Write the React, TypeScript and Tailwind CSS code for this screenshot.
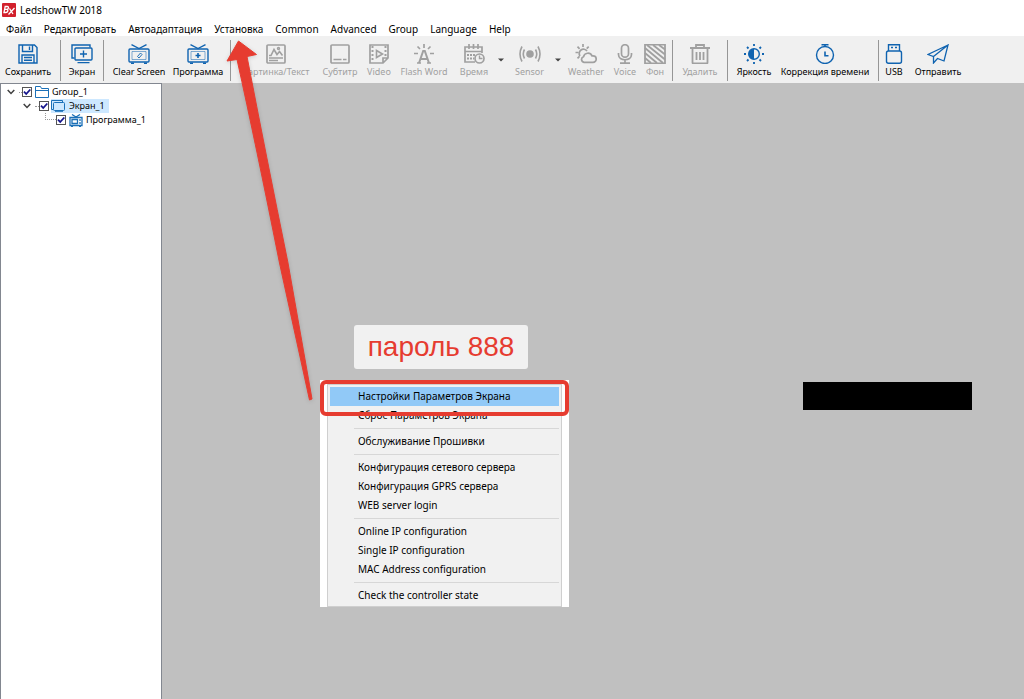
import React from 'react';

type IconProps = { children: React.ReactNode; className?: string };

function Icon({ children, className = 'h-5 w-[22px]' }: IconProps) {
  return (
    <svg viewBox="0 0 22 20" className={className} fill="none" stroke="currentColor" strokeWidth="1.4" aria-hidden="true">
      {children}
    </svg>
  );
}

const icons = {
  save: (
    <Icon>
      <path d="M2 1h15.500l2.500 2.500v15.500H2z" />
      <path d="M5.500 1v6.500h10V1M12.500 2.500v3.500M5 19v-8h12v8M7 13.500h8M7 16.200h8" />
    </Icon>
  ),
  screen: (
    <Icon>
      <path d="M3.500 14H1V1h18v2.500" />
      <rect x="4" y="4" width="17" height="12" rx="1" />
      <path d="M12.500 6.500v7M9 10h7M6.500 18.600h12" />
    </Icon>
  ),
  clear: (
    <Icon>
      <path d="M3.500 0.700L11 4.500l7.500-3.800" />
      <rect x="1" y="5" width="20" height="13" rx="1" />
      <path d="M4 7.500h14v8H4z" strokeWidth="0.500" />
      <path d="M9.500 12.500l3-3.500M11 14l3-3.500M9.500 12.500l1.500 1.500M12.500 9l1.500 1.500" strokeWidth="0.900" />
      <path d="M3 19.300h3M16 19.300h3" />
    </Icon>
  ),
  program: (
    <Icon>
      <path d="M3.500 0.700L11 4.500l7.500-3.800" />
      <rect x="1" y="5" width="20" height="13" rx="1" />
      <path d="M4 7.500h14v8H4z" strokeWidth="0.500" />
      <path d="M11 9v5M8.500 11.500h5" strokeWidth="1.600" />
      <path d="M3 19.300h3M16 19.300h3" />
    </Icon>
  ),
  picture: (
    <Icon>
      <rect x="2" y="1" width="18" height="18" rx="1" strokeWidth="1.700" />
      <path d="M4 11.500h2l3-6 3 5 2.500-3 3 4M4 14h14M4 16.500h9" strokeWidth="1.600" />
      <circle cx="13.500" cy="4.500" r="1" />
    </Icon>
  ),
  subtitle: (
    <Icon>
      <rect x="2" y="1" width="18" height="18" rx="1" strokeWidth="1.700" />
      <path d="M4.500 15.500h8M14 15.500h3.500" />
    </Icon>
  ),
  video: (
    <Icon>
      <path d="M2 1h18v13l-5 5H2zM20 14h-5v5" strokeWidth="1.700" />
      <path d="M4.500 2v16M17.500 2v11" strokeWidth="2" strokeDasharray="2 2" />
      <path d="M8.500 6.500l6 3.500-6 3.500z" strokeWidth="1.600" />
    </Icon>
  ),
  flash: (
    <Icon>
      <path d="M6 19l4.200-12h1.600L16 19M7.500 15h7" strokeWidth="2" />
      <path d="M4 19h4M14 19h4" />
      <path d="M11 0v4M4.500 2.500L7 5M17.500 2.500L15 5M1 9.500h4M17 9.500h4" strokeWidth="1.700" />
    </Icon>
  ),
  time: (
    <Icon>
      <path d="M12 18H2V3h17v6M2 7.500h17M6 0v5M10.500 0v5M15 0v5" strokeWidth="1.700" />
      <path d="M4 11h8M4 14.500h7" strokeWidth="1.800" strokeDasharray="2 1" />
      <circle cx="16.500" cy="14.500" r="4.500" strokeWidth="1.700" />
      <path d="M16.500 11.500v3h3" />
    </Icon>
  ),
  sensor: (
    <Icon>
      <circle cx="11" cy="10" r="3.800" fill="currentColor" stroke="none" />
      <path d="M5.500 5.500q-2.500 4.500 0 9M16.500 5.500q2.500 4.500 0 9M3 2.500q-4 7.500 0 15M19 2.500q4 7.500 0 15" strokeWidth="1.600" />
    </Icon>
  ),
  weather: (
    <Icon>
      <path d="M9 18.300h9a3.200 3.200 0 000-6.400h-1a4.500 4.500 0 00-8.500 0.800 2.900 2.900 0 000.500 5.600z" strokeWidth="1.700" />
      <path d="M5 12a4.300 4.300 0 117-5M8 0v3M2.500 2.700L4.600 4.800M0.500 8.500h2.800M13.700 2.700l-2 2M2.500 14.300l2-2" strokeWidth="1.700" />
    </Icon>
  ),
  voice: (
    <Icon>
      <rect x="7.500" y="0.700" width="7" height="12.500" rx="3.500" strokeWidth="1.700" />
      <path d="M4.500 9v1.500c0 7 13 7 13 0V9M11 16v3M6 19.200h10" strokeWidth="1.700" />
    </Icon>
  ),
  backdrop: (
    <Icon>
      <path d="M1 0.700h20v18.600H1z" strokeWidth="1.800" />
      <path d="M1 14l6 5M1 9l12 10M1 4l18 15M3 1l18 14.500M9 1l12 9.500M15 1l6 4.500" strokeWidth="1.800" />
    </Icon>
  ),
  trash: (
    <Icon>
      <path d="M1 4h20M7 3.500V1h8v2.500M3.500 5v13.500q0 1 1 1h13q1 0 1-1V5M7.500 8v8M11 8v8M14.500 8v8" strokeWidth="1.800" />
    </Icon>
  ),
  brightness: (
    <Icon>
      <circle cx="11" cy="10" r="5.300" />
      <path d="M11 4.700a5.300 5.300 0 000 10.600z" fill="currentColor" stroke="none" />
      <path d="M11 0v2M11 18v2M1 10h2M19 10h2M4 3l1.500 1.500M16.500 15.500L18 17M4 17l1.500-1.500M16.500 4.500L18 3" strokeWidth="1.800" />
    </Icon>
  ),
  clock: (
    <Icon>
      <circle cx="11" cy="11" r="8.500" />
      <path d="M7.500 0.700h7M11 1v2M11 7.500v4.200h3.500" strokeWidth="1.600" />
    </Icon>
  ),
  usb: (
    <Icon>
      <rect x="3.500" y="7" width="15" height="12.300" rx="2" />
      <path d="M5.500 7V0.700h11V7M8 3.500h2M12 3.500h2" />
    </Icon>
  ),
  send: (
    <Icon>
      <path d="M21 1L1 10.500l5.500 2zM21 1L6.500 12.500v6.500l4-4.500L17 17z" strokeWidth="1.300" />
    </Icon>
  ),
};

type ToolProps = { icon: React.ReactNode; label: string; width: string; disabled?: boolean };

function Tool({ icon, label, width, disabled = false }: ToolProps) {
  return (
    <button
      type="button"
      disabled={disabled}
      className={`flex ${width} shrink-0 flex-col items-center gap-0.5 pt-2 text-[#0f63b0] disabled:text-[#a0a0a0]`}
    >
      {icon}
      <span className={`text-[9px] leading-3 whitespace-nowrap ${disabled ? 'text-[#a0a0a0]' : 'text-black'}`}>{label}</span>
    </button>
  );
}

function Separator() {
  return <div className="mx-1 mt-1 mb-0.5 w-px shrink-0 bg-[#969696]" />;
}

function DropArrow({ label }: { label: string }) {
  return (
    <button type="button" aria-label={label} className="flex w-3 shrink-0 items-center justify-center">
      <svg viewBox="0 0 6 4" className="h-1 w-1.5" aria-hidden="true">
        <path d="M0 0.500h6L3 3.500z" fill="#444" />
      </svg>
    </button>
  );
}

function Chevron() {
  return (
    <svg viewBox="0 0 8 6" className="h-1.5 w-2 shrink-0" fill="none" stroke="#404040" strokeWidth="1.500" aria-hidden="true">
      <path d="M0.700 1L4 4.500 7.300 1" />
    </svg>
  );
}

function Check({ label }: { label: string }) {
  return (
    <span className="relative flex h-2.5 w-2.5 shrink-0">
      <input
        type="checkbox"
        defaultChecked
        aria-label={label}
        className="peer h-2.5 w-2.5 appearance-none border border-[#555] bg-white"
      />
      <svg viewBox="0 0 10 10" className="pointer-events-none absolute inset-0 hidden h-2.5 w-2.5 peer-checked:block" fill="none" stroke="#14148c" strokeWidth="1.800" aria-hidden="true">
        <path d="M2 4.700L4.200 7 8.300 2.500" />
      </svg>
    </span>
  );
}

const menus = ['Файл', 'Редактировать', 'Автоадаптация', 'Установка', 'Common', 'Advanced', 'Group', 'Language', 'Help'];

const setupGroups = [
  ['Настройки Параметров Экрана', 'Сброс Параметров Экрана'],
  ['Обслуживание Прошивки'],
  ['Конфигурация сетевого сервера', 'Конфигурация GPRS сервера', 'WEB server login'],
  ['Online IP configuration', 'Single IP configuration', 'MAC Address configuration'],
  ['Check the controller state'],
];

function SetupMenu() {
  return (
    <div className="absolute top-[297px] left-[158px] w-[249px] bg-white px-[7px] pt-1">
      <div className="border border-[#cfcfcf] bg-[#f1f1f1] px-0.5 pt-0.5 pb-px">
        {setupGroups.map((group, g) => (
          <div key={group[0]}>
            {g > 0 && <div className="my-[3px] ml-6 h-px bg-[#d7d7d7]" />}
            {group.map((item, i) => (
              <button
                key={item}
                type="button"
                className={`block h-[19px] w-full pl-7 text-left text-[10px] leading-[19px] whitespace-nowrap ${g === 0 && i === 0 ? 'bg-[#91c9f7]' : ''}`}
              >
                {item}
              </button>
            ))}
          </div>
        ))}
      </div>
      <div className="pointer-events-none absolute inset-x-0 top-0 h-9 rounded-md border-4 border-[#e63c30]" />
    </div>
  );
}

export default function App() {
  return (
    <div className="relative flex min-h-screen flex-col overflow-hidden bg-white font-['Noto_Sans',sans-serif] text-black">
      <header className="flex h-5 items-center gap-1 pl-0.5">
        <svg viewBox="0 0 14 14" className="h-3.5 w-3.5" aria-hidden="true">
          <rect width="14" height="14" rx="1" fill="#d2202c" />
          <path d="M2 9.500L3.200 3.500h2q1.600 0 1.200 1.500-.3 1.300-1.600 1.400 1.400.2 1 1.600-.4 1.500-2 1.500zM3 6.400H5M7.500 5.500l3.500 5.500M12.500 5L6.500 11.500" fill="none" stroke="#fff" strokeWidth="1.300" />
        </svg>
        <h1 className="text-[10px] leading-4">LedshowTW 2018</h1>
      </header>
      <nav className="flex h-4 items-center gap-3 pt-px pl-1.5 text-[10px] leading-4">
        {menus.map((m) => (
          <button key={m} type="button" className="whitespace-nowrap">
            {m}
          </button>
        ))}
      </nav>
      <div role="toolbar" className="flex h-[47px] bg-[#f0f0f0]">
        <Tool icon={icons.save} label="Сохранить" width="w-14" />
        <Separator />
        <Tool icon={icons.screen} label="Экран" width="w-[34px]" />
        <Separator />
        <Tool icon={icons.clear} label="Clear Screen" width="w-[62px]" />
        <Tool icon={icons.program} label="Программа" width="w-14" />
        <Separator />
        <Tool icon={icons.picture} label="Картинка/Текст" width="w-[82px]" disabled />
        <Tool icon={icons.subtitle} label="Субтитр" width="w-[46px]" disabled />
        <Tool icon={icons.video} label="Video" width="w-8" disabled />
        <Tool icon={icons.flash} label="Flash Word" width="w-[58px]" disabled />
        <Tool icon={icons.time} label="Время" width="w-[42px]" disabled />
        <DropArrow label="Время" />
        <Tool icon={icons.sensor} label="Sensor" width="w-[45px]" disabled />
        <DropArrow label="Sensor" />
        <Tool icon={icons.weather} label="Weather" width="w-11" disabled />
        <Tool icon={icons.voice} label="Voice" width="w-[34px]" disabled />
        <Tool icon={icons.backdrop} label="Фон" width="w-[26px]" disabled />
        <Separator />
        <Tool icon={icons.trash} label="Удалить" width="w-[46px]" disabled />
        <Separator />
        <Tool icon={icons.brightness} label="Яркость" width="w-11" />
        <Tool icon={icons.clock} label="Коррекция времени" width="w-[98px]" />
        <Separator />
        <Tool icon={icons.usb} label="USB" width="w-[22px]" />
        <Tool icon={icons.send} label="Отправить" width="w-[66px]" />
      </div>
      <div className="flex flex-1">
        <aside className="w-[162px] shrink-0 border border-b-0 border-[#828790] bg-white pt-px text-[9px] leading-[14px]">
          <div className="flex h-3.5 items-center pl-1.5">
            <Chevron />
            <span className="ml-1 w-[3px] border-t border-dotted border-[#999]" />
            <Check label="Group_1" />
            <svg viewBox="0 0 14 12" className="mx-[3px] h-3 w-3.5" fill="none" stroke="#1b70b8" aria-hidden="true">
              <path d="M0.500 11.500V0.500h5l1 2h7v9zM0.500 4.500h13" />
            </svg>
            <span>Group_1</span>
          </div>
          <div className="flex h-3.5 items-center pl-[22px]">
            <Chevron />
            <span className="ml-1 w-1 border-t border-dotted border-[#999]" />
            <Check label="Экран_1" />
            <span className="ml-0.5 flex h-3.5 items-center bg-[#cde8ff] pr-1">
              <svg viewBox="0 0 14 12" className="mr-1 h-3 w-3.5" fill="none" stroke="#1b70b8" aria-hidden="true">
                <path d="M2 9.500H0.500v-9h11V2" />
                <rect x="2.500" y="2.500" width="11" height="8" rx="1" />
                <path d="M4 11.700h8" />
              </svg>
              Экран_1
            </span>
          </div>
          <div className="flex h-3.5 items-center pl-11">
            <span className="h-3.5 w-[11px] shrink-0">
              <span className="block h-[7px] border-b border-l border-dotted border-[#999]" />
            </span>
            <Check label="Программа_1" />
            <svg viewBox="0 0 14 13" className="mx-[3px] h-[13px] w-3.5" fill="none" stroke="#1b70b8" strokeWidth="1.300" aria-hidden="true">
              <path d="M3 0.500l4 2.500 4-2.500" />
              <path d="M1 3.500h12v8H1zM3 5.500h5.500v4H3zM11 5v2M11 8v2M2 12.500h2M10 12.500h2" />
            </svg>
            <span>Программа_1</span>
          </div>
        </aside>
        <main className="relative flex-1 bg-[#c0c0c0]">
          <p className="absolute top-[242px] left-48 flex h-11 w-[174px] items-center justify-center rounded-[3px] bg-[#f1f1f1] font-['Liberation_Sans',sans-serif] text-[28px] whitespace-nowrap text-[#e63c30]">
            пароль 888
          </p>
          <SetupMenu />
          <div className="absolute top-[299px] left-[641px] h-7 w-[169px] bg-black" />
        </main>
      </div>
      <svg viewBox="0 0 100 380" className="pointer-events-none absolute top-[30px] left-[220px] h-[380px] w-[100px] drop-shadow-sm" aria-hidden="true">
        <path d="M18.500 11L36.500 24.500 27 26.500Q46 125 68 233L92 369 89.500 370 59.500 233Q36 115 17 29.500L7 31z" fill="#e63c30" stroke="#e63c30" strokeLinejoin="round" />
      </svg>
    </div>
  );
}
